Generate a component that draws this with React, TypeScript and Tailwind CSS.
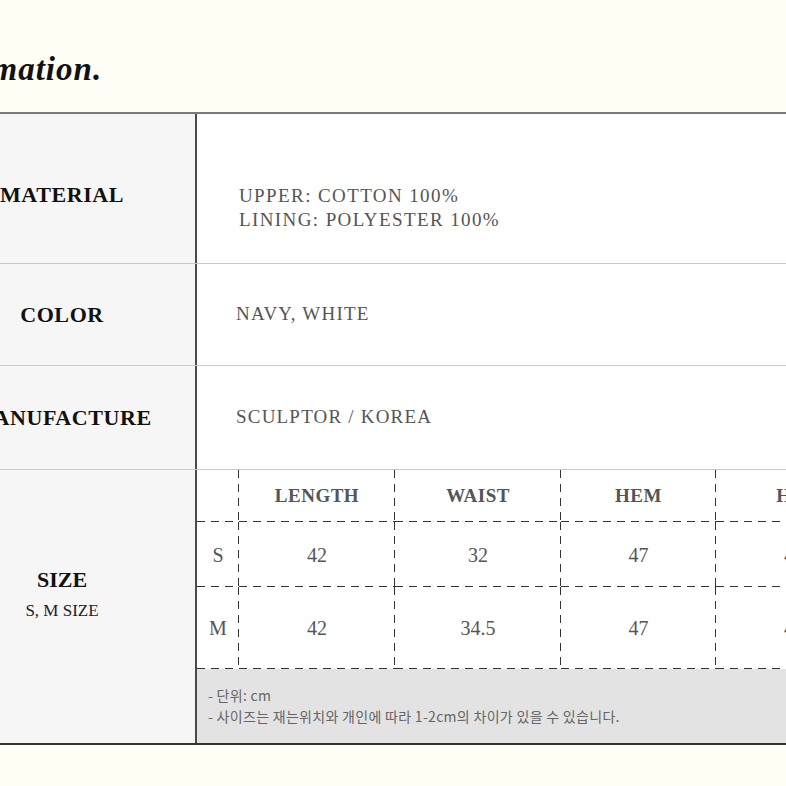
const serif = "font-['Liberation_Serif','Times_New_Roman',serif]";
const korean = "font-['Noto_Sans_CJK_KR','Noto_Sans',sans-serif]";

// dashed lines on the bottom and right edge of each size cell
const dashed =
  "bg-no-repeat [background-image:repeating-linear-gradient(to_right,#333_0_8px,transparent_8px_14px),repeating-linear-gradient(to_bottom,#333_0_8px,transparent_8px_14px)] [background-size:100%_1px,1px_100%] [background-position:left_bottom,right_top]";

const columns = ["", "LENGTH", "WAIST", "HEM", "HIP"];
const sizes = [
  { h: "h-[65px]", cells: ["S", "42", "32", "47", "48"] },
  { h: "h-[82px]", cells: ["M", "42", "34.5", "47", "49"] },
];

const App = () => {
  return (
    <div className={`w-[786px] h-[786px] overflow-hidden bg-[#fffef5] ${serif}`}>
      <div className="w-[900px] -ml-[71px]">

        {/* Title */}
        <div className="h-[112px] pt-[54px] -ml-[14px]">
          <h1 className="text-[33px] leading-[30px] font-bold italic text-[#111] tracking-[1px]">
            Information.
          </h1>
        </div>

        {/* Table */}
        <div className="border-t-2 border-[#7a7a7a] border-b-2 border-b-[#333]">

          {/* Material */}
          <div className="flex h-[150px] border-b border-[#c9c9c9]">
            <div className="w-[268px] shrink-0 border-r-2 border-[#4a4a4a] bg-[#f6f6f6] flex items-center justify-center pt-[12px]">
              <span className="text-[22px] font-bold text-[#111] tracking-[0.6px]">MATERIAL</span>
            </div>
            <div className="flex-1 bg-white flex items-center pl-[42px] pt-[38px]">
              <div className="text-[19px] leading-[24px] text-[#555] tracking-[1.4px]">
                <p>UPPER: COTTON 100%</p>
                <p>LINING: POLYESTER 100%</p>
              </div>
            </div>
          </div>

          {/* Color */}
          <div className="flex h-[102px] border-b border-[#c9c9c9]">
            <div className="w-[268px] shrink-0 border-r-2 border-[#4a4a4a] bg-[#f6f6f6] flex items-center justify-center">
              <span className="text-[22px] font-bold text-[#111] tracking-[0.6px]">COLOR</span>
            </div>
            <div className="flex-1 bg-white flex items-center pl-[39px]">
              <span className="text-[19px] text-[#555] tracking-[1.2px]">NAVY, WHITE</span>
            </div>
          </div>

          {/* Manufacture */}
          <div className="flex h-[104px] border-b border-[#c9c9c9]">
            <div className="w-[268px] shrink-0 border-r-2 border-[#4a4a4a] bg-[#f6f6f6] flex items-center justify-center">
              <span className="text-[22px] font-bold text-[#111] tracking-[0.6px]">MANUFACTURE</span>
            </div>
            <div className="flex-1 bg-white flex items-center pl-[39px]">
              <span className="text-[19px] text-[#555] tracking-[1.2px]">SCULPTOR / KOREA</span>
            </div>
          </div>

          {/* Size */}
          <div className="flex h-[273px]">
            <div className="w-[268px] shrink-0 border-r-2 border-[#4a4a4a] bg-[#f6f6f6] flex flex-col items-center justify-center pb-[24px]">
              <span className="text-[22px] leading-[28px] font-bold text-[#111]">SIZE</span>
              <span className="text-[17px] leading-[24px] text-[#222] mt-[5px]">S, M SIZE</span>
            </div>
            <div className="flex-1 flex flex-col">
              <div className="bg-white grid grid-cols-[42px_156px_166px_155px_156px]">
                {columns.map((c, i) => (
                  <div key={c + i} className={`h-[52px] flex items-center justify-center ${dashed}`}>
                    <span className="text-[19px] font-bold text-[#555] tracking-[0.5px]">{c}</span>
                  </div>
                ))}
                {sizes.map((row) =>
                  row.cells.map((v, i) => (
                    <div key={row.cells[0] + i} className={`${row.h} flex items-center justify-center ${dashed}`}>
                      <span className="text-[20px] text-[#555]">{v}</span>
                    </div>
                  ))
                )}
              </div>

              {/* Notes */}
              <div className={`flex-1 bg-[#e3e3e3] flex flex-col justify-center pl-[11px] text-[14px] leading-[21px] text-[#666] tracking-[0.3px] ${korean}`}>
                <p>- 단위: cm</p>
                <p>- 사이즈는 재는위치와 개인에 따라 1-2cm의 차이가 있을 수 있습니다.</p>
              </div>
            </div>
          </div>

        </div>
      </div>
    </div>
  );
};

export default App;
